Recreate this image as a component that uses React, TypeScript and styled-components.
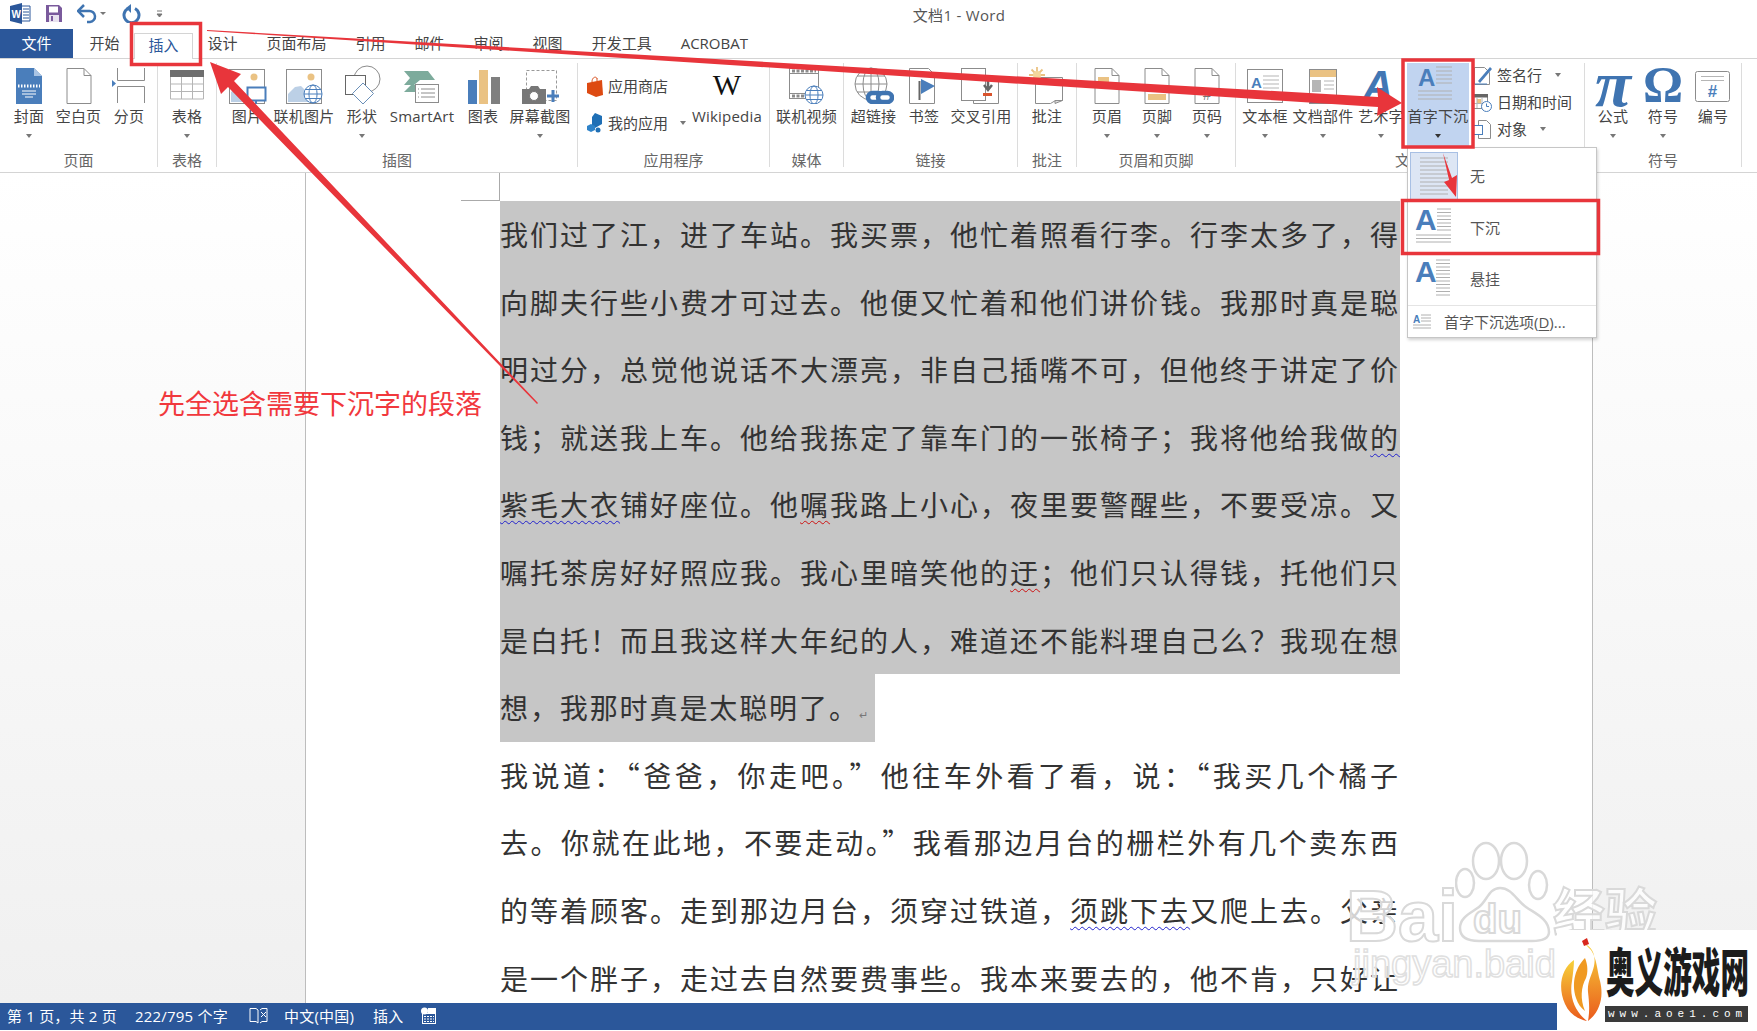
import React from "react";
import styled, { createGlobalStyle } from "styled-components";

const Global = createGlobalStyle`
  html, body { margin: 0; padding: 0; background: #fff; overflow: hidden; }
  * { box-sizing: border-box; }
`;

const UI = `"Open Sans", "Noto Sans CJK SC", sans-serif`;
const BLUE = "#4a7ebb";
const GREY = "#8c8c8c";
const LIGHT = "#b5b5b5";
const ORANGE = "#eac283";
const RED = "#e8353b";

const App_ = styled.div`
  position: relative;
  width: 1757px;
  height: 1031px;
  display: flex;
  flex-direction: column;
  overflow: hidden;
  font-family: ${UI};
  font-size: 15px;
  color: #444;
  padding-bottom: 1px;
`;

const TitleBar = styled.div`
  height: 29px;
  display: flex;
  align-items: center;
  flex: none;
`;
const QuickAccess = styled.div`
  width: 200px;
  padding: 0 0 2px 10px;
  display: flex;
  align-items: center;
  gap: 15px;
`;
const Title = styled.div`
  flex: 1;
  text-align: center;
  padding-right: 39px;
  color: #555;
  letter-spacing: 0.3px;
`;

const TabBar = styled.div`
  height: 30px;
  flex: none;
  display: flex;
  border-bottom: 1px solid #d4d4d4;
`;
const FileTab = styled.div`
  width: 73px;
  height: 29px;
  background: #2b579a;
  color: #fff;
  display: flex;
  align-items: center;
  justify-content: center;
  margin-right: 2px;
  padding-bottom: 2px;
`;
const Tab = styled.div<{ $active?: boolean }>`
  height: 29px;
  padding: 0 14.5px 2px;
  display: flex;
  align-items: center;
  color: #444;
  background: #fff;
  ${(p) =>
    p.$active &&
    `
    color: #2b579a;
    border: 1px solid #d4d4d4;
    border-bottom: 0;
    height: 26px;
    margin-top: 4px;
    padding: 0 13.5px 5px;
  `}
`;

const Ribbon = styled.div`
  height: 114px;
  flex: none;
  display: flex;
  border-bottom: 1px solid #d4d4d4;
  padding: 4px 0 5px;
`;
const Group = styled.div<{ $w: number }>`
  width: ${(p) => p.$w}px;
  flex: none;
  border-right: 1px solid #dcdcdc;
  display: flex;
  flex-direction: column;
`;
const GroupBody = styled.div<{ $pad?: number }>`
  flex: 1;
  display: flex;
  padding-left: ${(p) => p.$pad ?? 0}px;
`;
const GroupLabel = styled.div`
  height: 24px;
  line-height: 24px;
  text-align: center;
  color: #666;
`;
const RibbonBtn = styled.div<{ $w: number; $active?: boolean }>`
  width: ${(p) => p.$w}px;
  flex: none;
  height: 85px;
  display: flex;
  flex-direction: column;
  align-items: center;
  white-space: nowrap;
  background: ${(p) => (p.$active ? "#c1d4f0" : "transparent")};
`;
const IconBox = styled.div`
  height: 41px;
  display: flex;
  align-items: flex-end;
  justify-content: center;
`;
const BtnLabel = styled.div`
  height: 24px;
  line-height: 24px;
  letter-spacing: 0.2px;
`;
const Caret = styled.div<{ $dark?: boolean }>`
  width: 0;
  height: 0;
  margin-top: 6px;
  border-left: 3.5px solid transparent;
  border-right: 3.5px solid transparent;
  border-top: 4px solid ${(p) => (p.$dark ? "#333" : "#777")};
`;
const SmallStack = styled.div<{ $w: number; $row: number; $top?: number; $left?: number }>`
  width: ${(p) => p.$w}px;
  flex: none;
  margin-top: ${(p) => p.$top ?? 0}px;
  padding-left: ${(p) => p.$left ?? 0}px;
  display: flex;
  flex-direction: column;
  > div { height: ${(p) => p.$row}px; }
`;
const SmallRow = styled.div<{ $gap?: number }>`
  display: flex;
  align-items: center;
  gap: ${(p) => p.$gap ?? 4}px;
  white-space: nowrap;
`;
const InlineCaret = styled(Caret)`
  margin: 0 0 0 8px;
`;
const WikiMark = styled.div`
  font-family: "Liberation Serif", serif;
  font-size: 30px;
  line-height: 38px;
  color: #111;
`;
const GlyphIcon = styled.div<{ $s: number; $italic?: boolean }>`
  font-family: "Liberation Serif", serif;
  font-weight: bold;
  font-style: ${(p) => (p.$italic ? "italic" : "normal")};
  font-size: ${(p) => p.$s}px;
  line-height: 40px;
  color: #3f74b1;
`;

const DocArea = styled.div`
  flex: 1;
  display: flex;
  min-height: 0;
`;
const LeftGutter = styled.div`
  width: 305px;
  flex: none;
  background: linear-gradient(#ffffff, #f0f0f0);
`;
const RightGutter = styled(LeftGutter)`
  width: auto;
  flex: 1;
`;
const Page = styled.div`
  position: relative;
  width: 1288px;
  flex: none;
  background: #fff;
  border-left: 1px solid #bdbdbd;
  border-right: 1px solid #bdbdbd;
  padding: 28px 191px 0 194px;
  overflow: hidden;
  font-family: "Noto Sans CJK SC", sans-serif;
  font-size: 28px;
  color: #333;
  letter-spacing: 1.9px;
`;
const CropMark = styled.div`
  position: absolute;
  left: 155px;
  top: 0;
  width: 39px;
  height: 28px;
  border-right: 1px solid #aaa;
  border-bottom: 1px solid #aaa;
`;
const Line = styled.div<{ $sel?: boolean; $last?: boolean }>`
  height: 67.6px;
  line-height: 66px;
  background: ${(p) => (p.$sel ? "#c6c6c6" : "transparent")};
  width: ${(p) => (p.$last ? "375px" : "900px")};
  text-align: ${(p) => (p.$last ? "left" : "justify")};
  text-align-last: ${(p) => (p.$last ? "left" : "justify")};
`;
const Squiggle = styled.span<{ $c: string }>`
  text-decoration: underline wavy ${(p) => p.$c} 1px;
  text-underline-offset: 4px;
`;
const ReturnMark = styled.span`
  font-size: 11px;
  color: #777;
  letter-spacing: 0;
`;

const StatusBar = styled.div`
  height: 27px;
  flex: none;
  background: #2b579a;
  color: #fff;
  display: flex;
  align-items: center;
  padding: 0 0 2px 7px;
  letter-spacing: 0.2px;
`;
const StatusItem = styled.div<{ $w: number }>`
  width: ${(p) => p.$w}px;
  flex: none;
  white-space: nowrap;
  display: flex;
  align-items: center;
`;

const Menu = styled.div`
  position: absolute;
  left: 1407px;
  top: 147px;
  width: 190px;
  height: 191px;
  background: #fff;
  border: 1px solid #c6c6c6;
  box-shadow: 1px 2px 3px rgba(0, 0, 0, 0.18);
  display: flex;
  flex-direction: column;
  padding-top: 2px;
`;
const MenuItem = styled.div`
  height: 52px;
  display: flex;
  align-items: center;
  padding-left: 2px;
  color: #555;
`;
const MenuTile = styled.div<{ $on?: boolean }>`
  width: 48px;
  height: 48px;
  margin-right: 12px;
  display: flex;
  align-items: center;
  justify-content: center;
  background: ${(p) => (p.$on ? "#dde6f4" : "transparent")};
  border: 1px solid ${(p) => (p.$on ? "#a8c0e4" : "transparent")};
`;
const MenuOption = styled.div`
  margin-top: 1px;
  border-top: 1px solid #e4e4e4;
  height: 32px;
  display: flex;
  align-items: center;
  padding-left: 5px;
  gap: 13px;
  color: #555;
  u { text-underline-offset: 2px; }
`;

const Annotations = styled.svg`
  position: absolute;
  left: 0;
  top: 0;
  width: 1757px;
  height: 1031px;
  pointer-events: none;
`;
const Note = styled.div`
  position: absolute;
  left: 158px;
  top: 384px;
  font-size: 27px;
  line-height: 38px;
  color: #f1383d;
  font-family: "Noto Sans CJK SC", sans-serif;
  white-space: nowrap;
`;

const Watermark = styled.div`
  position: absolute;
  left: 1345px;
  top: 840px;
  width: 330px;
  height: 155px;
`;
const WmPaw = styled.svg`
  position: absolute;
  left: 110px;
  top: 0;
`;
const WmText = styled.div<{ $x: number; $y: number; $s: number; $thin?: boolean }>`
  position: absolute;
  left: ${(p) => p.$x}px;
  top: ${(p) => p.$y}px;
  font-family: "Liberation Sans", "Noto Sans CJK SC", sans-serif;
  font-size: ${(p) => p.$s}px;
  line-height: 1;
  font-weight: ${(p) => (p.$thin ? 400 : 700)};
  color: rgba(255, 255, 255, 0.78);
  -webkit-text-stroke: ${(p) => (p.$thin ? "1.5px #e0e0e0" : "2px #d9d9d9")};
  white-space: nowrap;
`;

const LogoBox = styled.div`
  position: absolute;
  left: 1557px;
  top: 930px;
  width: 200px;
  height: 101px;
  background: #fff;
`;
const LogoName = styled.div`
  position: absolute;
  left: 49px;
  top: 10px;
  width: 260px;
  font-family: "Noto Sans CJK SC", sans-serif;
  font-weight: 900;
  font-size: 52px;
  line-height: 60px;
  color: #1c1c1c;
  white-space: nowrap;
  transform-origin: left top;
  transform: scaleX(0.55);
`;
const LogoUrl = styled.div`
  position: absolute;
  left: 48px;
  top: 76px;
  width: 143px;
  height: 16px;
  background: #3a3a3a;
  color: #fff;
  font-family: "Liberation Mono", monospace;
  font-size: 11px;
  line-height: 16px;
  letter-spacing: 5px;
  padding-left: 3px;
  white-space: nowrap;
  overflow: hidden;
`;
const LogoFlame = styled.svg`
  position: absolute;
  left: 2px;
  top: 8px;
`;

/* ---------- icons ---------- */
const Svg: React.FC<{ w?: number; h?: number; children?: React.ReactNode }> = ({ w = 40, h = 40, children }) => (
  <svg width={w} height={h} viewBox={`0 0 ${w} ${h}`} fill="none">{children}</svg>
);
const pagePath = "M8 4.5h17l7 7v28H8z M25 4.5v7h7";
const Page0: React.FC<{ children?: React.ReactNode }> = ({ children }) => (
  <Svg><path d={pagePath} stroke={GREY} fill="#fff" />{children}</Svg>
);
const Cover = () => (
  <Svg>
    <path d="M7 4h18l8 8v28H7z" fill={BLUE} />
    <path d="M25 4l8 8h-8z" fill="#a9c4e4" />
    <path d="M9 22h22" stroke="#fff" strokeWidth="3" strokeDasharray="1.5 1.5" />
    <path d="M13 27h14M13 30h14M16 33h8" stroke="#fff" />
  </Svg>
);
const PageBreak = () => (
  <Svg>
    <path d="M8.5 4v12.5h27V4M8.5 39V22.5h27V39" stroke={GREY} />
    <path d="M3 16l4 3.5L3 23z" fill={BLUE} />
  </Svg>
);
const TableIcon = () => (
  <Svg>
    <rect x="3" y="6" width="34" height="7" fill="#6e6e6e" />
    <path d="M3.5 13v22h33V13M3.5 20h33M3.5 27.5h33M14.5 13v22M25.5 13v22" stroke={LIGHT} />
  </Svg>
);
const Picture = () => (
  <Svg>
    <rect x="2.5" y="5.5" width="35" height="34" stroke={GREY} fill="#fff" />
    <circle cx="27" cy="13" r="3.5" fill={ORANGE} />
    <path d="M4 38V28l7-6 9 10v6z" fill="#bcd0e6" />
    <rect x="20.5" y="23.5" width="18" height="13" fill="#fff" stroke={BLUE} strokeWidth="2" />
    <path d="M29 37v3" stroke={BLUE} strokeWidth="2" />
  </Svg>
);
const Globe: React.FC<{ x: number; y: number; r: number; c?: string }> = ({ x, y, r, c = BLUE }) => (
  <g stroke={c} fill="#fff">
    <circle cx={x} cy={y} r={r} />
    <ellipse cx={x} cy={y} rx={r * 0.45} ry={r} fill="none" />
    <path d={`M${x - r} ${y}h${2 * r}M${x - r * 0.85} ${y - r * 0.5}h${1.7 * r}M${x - r * 0.85} ${y + r * 0.5}h${1.7 * r}`} />
  </g>
);
const OnlinePicture = () => (
  <Svg>
    <rect x="2.5" y="5.5" width="35" height="34" stroke={GREY} fill="#fff" />
    <circle cx="27" cy="13" r="3.5" fill={ORANGE} />
    <path d="M4 38V30l7-7 6-1 9 9v7z" fill="#bcd0e6" />
    <Globe x={29} y={30} r={9} />
  </Svg>
);
const Shapes = () => (
  <Svg>
    <circle cx="25" cy="15" r="13" stroke={GREY} fill="#fff" />
    <rect x="3.5" y="11.5" width="20" height="19" stroke="#666" fill="#fff" />
    <path d="M21 19l10.5 10.5L21 40 10.5 29.5z" stroke="#6a8fb8" fill="#fff" />
  </Svg>
);
const SmartArtIcon = () => (
  <Svg>
    <path d="M2 7h24l7 9H18l-6 5H2l6-7z" fill="#7dab9c" />
    <path d="M2 28l7-7h5v7z" fill="#7dab9c" />
    <rect x="13.5" y="20.5" width="23" height="18" stroke={GREY} fill="#fff" />
    <path d="M19 25h14M19 29h14M19 33h14M16 25h1M16 29h1M16 33h1" stroke={GREY} />
  </Svg>
);
const Chart = () => (
  <Svg>
    <rect x="5" y="16" width="9" height="24" fill={BLUE} />
    <rect x="16" y="6" width="9" height="34" fill={ORANGE} />
    <rect x="28" y="13" width="9" height="27" fill="#7f7f7f" />
  </Svg>
);
const Screenshot = () => (
  <Svg>
    <rect x="6.5" y="6.5" width="30" height="30" stroke="#999" strokeDasharray="3 2" />
    <path d="M2 25h7l2-3h7l2 3h6v15H2z" fill="#777" />
    <circle cx="14" cy="32" r="4.5" fill="#fff" stroke="#777" />
    <path d="M33 26v12M27 32h12" stroke={BLUE} strokeWidth="3" />
  </Svg>
);
const StoreBag = () => (
  <Svg w={18} h={22}>
    <path d="M6 7C6 2 10 1 11 3.5M11 6V3" stroke="#d9501e" />
    <path d="M1 8l15-3 1 15-7 2-9-4z" fill="#dd4a12" />
  </Svg>
);
const MyApps = () => (
  <Svg w={18} h={22}>
    <path d="M9 1l7 3v8l-7 4-3-2V5z" fill="#1f6fb5" />
    <path d="M5 12l4 2v4l-4 2-4-2v-4z" fill="#2f83c9" />
    <circle cx="12" cy="18" r="2.5" fill="#1f6fb5" />
  </Svg>
);
const Video = () => (
  <Svg>
    <rect x="2.5" y="4.5" width="29" height="30" stroke={GREY} fill="#fff" />
    <path d="M2.5 9.5h29M2.5 29.5h29" stroke={GREY} />
    <path d="M5 7h24M5 32h16" stroke={GREY} strokeWidth="3" strokeDasharray="3 1.5" />
    <Globe x={27} y={31} r={9} />
  </Svg>
);
const Hyperlink = () => (
  <Svg>
    <g stroke={GREY}>
      <circle cx="17" cy="20" r="16" />
      <ellipse cx="17" cy="20" rx="8" ry="16" />
      <path d="M1 20h32M3 12h28M3 28h28M17 4v32" />
    </g>
    <g stroke="#3f74b1" strokeWidth="4.5" fill="#fff">
      <rect x="14" y="29" width="15" height="9" rx="4.5" />
      <rect x="24" y="29" width="14" height="9" rx="4.5" />
    </g>
  </Svg>
);
const Bookmark = () => (
  <Svg>
    <path d="M5.5 4.5h19l6 6v29h-25z" stroke={GREY} fill="#fff" />
    <path d="M15.5 17v19" stroke="#666" strokeWidth="2" />
    <path d="M17 15l14 7-14 8z" fill={BLUE} />
  </Svg>
);
const CrossRef = () => (
  <Svg w={44}>
    <rect x="2.5" y="4.5" width="24" height="32" stroke={GREY} fill="#fff" />
    <path d="M14 13.5h25.5v26H14.5v-3" stroke={GREY} />
    <path d="M29 15v9M25 21l4 5 4-5" stroke="#666" strokeWidth="2.5" />
    <rect x="24" y="29" width="9" height="3" fill="#d9532c" />
  </Svg>
);
const Comment = () => (
  <Svg>
    <path d="M8.5 13.5h27v23h-7l-5 3h-15z" stroke={GREY} fill="#fff" />
    <path d="M28 36.5v3l7.5-3z" fill="#ddd" stroke={GREY} />
    <g stroke={ORANGE} strokeWidth="1.8">
      <path d="M10 3v16M2 11h16M4.5 5.5l11 11M15.5 5.5l-11 11" />
    </g>
    <circle cx="10" cy="11" r="4" fill="#f3d69c" />
  </Svg>
);
const Header = () => (
  <Page0><rect x="11" y="13" width="11" height="6" fill={ORANGE} /></Page0>
);
const Footer = () => (
  <Page0><rect x="11" y="30" width="18" height="6" fill={ORANGE} /></Page0>
);
const PageNum = () => (
  <Page0><text x="20" y="36" fontSize="14" fill="#777" textAnchor="middle" fontFamily="Liberation Sans">#</text></Page0>
);
const TextBox = () => (
  <Svg>
    <rect x="2.5" y="5.5" width="35" height="33" stroke={GREY} fill="#fff" />
    <text x="6" y="24" fontSize="15" fontWeight="700" fill={BLUE} fontFamily="Liberation Sans">A</text>
    <path d="M18 12h16M18 16h16M18 20h16M18 24h16M6 29h28M6 33h28" stroke={LIGHT} />
  </Svg>
);
const DocParts = () => (
  <Svg>
    <rect x="6.5" y="5.5" width="27" height="34" stroke={GREY} fill="#fff" />
    <rect x="7" y="6" width="26" height="7" fill={ORANGE} />
    <rect x="9" y="16" width="9" height="12" fill={LIGHT} />
    <path d="M21 17h10M21 21h10M21 25h10" stroke={LIGHT} />
    <rect x="7" y="33" width="26" height="6" fill="#3f74b1" />
  </Svg>
);
const WordArt = () => (
  <Svg>
    <text x="17" y="36" fontSize="42" fontStyle="italic" fontWeight="700" fill="#4277b4" textAnchor="middle" fontFamily="Liberation Sans">A</text>
  </Svg>
);
const DropLines: React.FC<{ x: number; n: number; y: number; to: number; g: number; c?: string }> = ({ x, n, y, to, g, c = "#b0b0b0" }) => (
  <path d={Array.from({ length: n }, (_, i) => `M${x} ${y + i * g}H${to}`).join("")} stroke={c} />
);
const DropCapIcon = () => (
  <Svg w={40} h={42}>
    <text x="0" y="24" fontSize="24" fontWeight="700" fill={BLUE} fontFamily="Liberation Sans">A</text>
    <DropLines x={18} to={34} y={5} g={4} n={5} />
    <DropLines x={0} to={34} y={29} g={4} n={3} />
  </Svg>
);
const MenuDrop = () => (
  <Svg w={40} h={44}>
    <text x="1" y="25" fontSize="30" fontWeight="700" fill={BLUE} fontFamily="Liberation Sans">A</text>
    <DropLines x={23} to={37} y={4} g={3.5} n={7} />
    <DropLines x={2} to={37} y={30} g={3.5} n={3} />
  </Svg>
);
const MenuHang = () => (
  <Svg w={40} h={44}>
    <text x="1" y="25" fontSize="30" fontWeight="700" fill={BLUE} fontFamily="Liberation Sans">A</text>
    <DropLines x={22} to={36} y={3} g={3.5} n={11} />
  </Svg>
);
const Signature = () => (
  <Svg w={20} h={22}>
    <path d="M2.5 3.5h10l5 5v12h-15z" stroke={GREY} fill="#fff" />
    <path d="M6 17L18 3l2 2L8 19z" fill={BLUE} />
    <path d="M3 20h12" stroke={BLUE} />
  </Svg>
);
const DateTime = () => (
  <Svg w={20} h={22}>
    <rect x="0.5" y="3.5" width="15" height="14" stroke={GREY} fill="#fff" />
    <rect x="0" y="3" width="16" height="3.5" fill="#666" />
    <rect x="5" y="8" width="4" height="4" fill={ORANGE} />
    <path d="M1 12.5h14M5 7v10M10 7v10" stroke={LIGHT} />
    <circle cx="14.5" cy="15.5" r="5" fill="#fff" stroke={BLUE} />
    <path d="M14.5 12.5v3h2.5" stroke={BLUE} />
  </Svg>
);
const ObjectIcon = () => (
  <Svg w={20} h={22}>
    <path d="M6.5 2.5h8l4 4v14h-12z" stroke={GREY} fill="#fff" />
    <rect x="1.5" y="7.5" width="9" height="9" stroke={BLUE} fill="#fff" />
  </Svg>
);
const NumberIcon = () => (
  <Svg>
    <rect x="2.5" y="7.5" width="34" height="30" rx="2" stroke={GREY} fill="#fff" />
    <path d="M8 12.5h23M8 16.5h23" stroke={LIGHT} />
    <text x="19.5" y="33" fontSize="17" fontWeight="700" fill={BLUE} textAnchor="middle" fontFamily="Liberation Sans">#</text>
  </Svg>
);
const WordLogo = () => (
  <Svg w={21} h={21}>
    <path d="M0 3l12-3v21L0 18z" fill="#2b579a" />
    <path d="M12 3h8v15h-8" fill="#fff" stroke="#2b579a" />
    <path d="M13 6h6M13 9h6M13 12h6M13 15h6" stroke="#2b579a" />
    <text x="1.5" y="15" fontSize="10" fontWeight="700" fill="#fff" fontFamily="Liberation Sans">W</text>
  </Svg>
);
const SaveIcon = () => (
  <Svg w={16} h={17}>
    <path d="M0 0h13l3 3v14H0z" fill="#7a5a9c" />
    <rect x="3" y="1.5" width="9" height="6" fill="#fff" />
    <rect x="3" y="10" width="10" height="7" fill="#e8e2ef" />
    <rect x="5" y="11" width="2" height="5" fill="#7a5a9c" />
  </Svg>
);
const UndoIcon = () => (
  <Svg w={30} h={20}>
    <path d="M3 7h9a5.5 5.5 0 0 1 1 11H10" stroke="#3f74b1" strokeWidth="2.5" />
    <path d="M7 1L1 7l6 6" stroke="#3f74b1" strokeWidth="2.5" />
    <path d="M23 8l3 3 3-3z" fill="#777" />
  </Svg>
);
const RedoIcon = () => (
  <Svg w={19} h={19}>
    <path d="M6 4.5a7.5 7.5 0 1 0 7 0" stroke="#3f74b1" strokeWidth="3" />
    <path d="M9 0v9l-5-5z" fill="#3f74b1" />
  </Svg>
);
const CustomizeIcon = () => (
  <Svg w={8} h={10}>
    <path d="M1 2h5M1 5l2.5 3L6 5z" stroke="#777" fill="#777" />
  </Svg>
);
const BookIcon = () => (
  <Svg w={19} h={17}>
    <path d="M1 1.5h6l2 1.5v13l-2-1.5H1zM11 3l2-1.5h5v13h-5l-2 1.5" stroke="#fff" fill="none" />
    <path d="M12 5l5 5M17 5l-5 5" stroke="#fff" />
  </Svg>
);
const MacroIcon = () => (
  <Svg w={16} h={18}>
    <circle cx="3.5" cy="4" r="3.5" fill="#fff" />
    <rect x="7" y="1" width="8" height="5" fill="#fff" />
    <rect x="1.5" y="6.5" width="13" height="10" stroke="#fff" />
    <path d="M3 9.5h10M3 12h10M3 14.5h10" stroke="#fff" strokeDasharray="2 1" />
  </Svg>
);

const Btn: React.FC<{ w: number; label: string; icon: React.ReactNode; caret?: boolean; active?: boolean }> = ({ w, label, icon, caret, active }) => (
  <RibbonBtn $w={w} $active={active}>
    <IconBox>{icon}</IconBox>
    <BtnLabel>{label}</BtnLabel>
    {caret && <Caret $dark={active} />}
  </RibbonBtn>
);

const TABS = ["开始", "插入", "设计", "页面布局", "引用", "邮件", "审阅", "视图", "开发工具", "ACROBAT"];

const LINES: { t: React.ReactNode; sel?: boolean; last?: boolean }[] = [
  { t: "我们过了江，进了车站。我买票，他忙着照看行李。行李太多了，得", sel: true },
  { t: "向脚夫行些小费才可过去。他便又忙着和他们讲价钱。我那时真是聪", sel: true },
  { t: "明过分，总觉他说话不大漂亮，非自己插嘴不可，但他终于讲定了价", sel: true },
  { t: <>钱；就送我上车。他给我拣定了靠车门的一张椅子；我将他给我做<Squiggle $c="#2222cc">的</Squiggle></>, sel: true },
  { t: <><Squiggle $c="#2222cc">紫毛大衣</Squiggle>铺好座位。他<Squiggle $c="#cc1111">嘱</Squiggle>我路上小心，夜里要警醒些，不要受凉。又</>, sel: true },
  { t: <>嘱托茶房好好照应我。我心里暗笑他的<Squiggle $c="#cc1111">迂</Squiggle>；他们只认得钱，托他们只</>, sel: true },
  { t: "是白托！而且我这样大年纪的人，难道还不能料理自己么？我现在想", sel: true },
  { t: <>想，我那时真是太聪明了。<ReturnMark>↵</ReturnMark></>, sel: true, last: true },
  { t: "我说道：“爸爸，你走吧。”他往车外看了看，说：“我买几个橘子" },
  { t: "去。你就在此地，不要走动。”我看那边月台的栅栏外有几个卖东西" },
  { t: <>的等着顾客。走到那边月台，须穿过铁道，<Squiggle $c="#2222cc">须跳下去</Squiggle>又爬上去。父亲</> },
  { t: "是一个胖子，走过去自然要费事些。我本来要去的，他不肯，只好让" },
];

export default function App() {
  return (
    <App_ lang="zh-CN">
      <Global />
      <TitleBar>
        <QuickAccess>
          <WordLogo />
          <SaveIcon />
          <UndoIcon />
          <RedoIcon />
          <CustomizeIcon />
        </QuickAccess>
        <Title>文档1 - Word</Title>
      </TitleBar>

      <TabBar>
        <FileTab>文件</FileTab>
        {TABS.map((t) => (
          <Tab key={t} $active={t === "插入"}>{t}</Tab>
        ))}
      </TabBar>

      <Ribbon>
        <Group $w={158}>
          <GroupBody $pad={5}>
            <Btn w={48} label="封面" icon={<Cover />} caret />
            <Btn w={51} label="空白页" icon={<Page0 />} />
            <Btn w={50} label="分页" icon={<PageBreak />} />
          </GroupBody>
          <GroupLabel>页面</GroupLabel>
        </Group>
        <Group $w={59}>
          <GroupBody>
            <Btn w={58} label="表格" icon={<TableIcon />} caret />
          </GroupBody>
          <GroupLabel>表格</GroupLabel>
        </Group>
        <Group $w={361}>
          <GroupBody $pad={5}>
            <Btn w={50} label="图片" icon={<Picture />} />
            <Btn w={64} label="联机图片" icon={<OnlinePicture />} />
            <Btn w={52} label="形状" icon={<Shapes />} caret />
            <Btn w={68} label="SmartArt" icon={<SmartArtIcon />} />
            <Btn w={54} label="图表" icon={<Chart />} />
            <Btn w={60} label="屏幕截图" icon={<Screenshot />} caret />
          </GroupBody>
          <GroupLabel>插图</GroupLabel>
        </Group>
        <Group $w={192}>
          <GroupBody $pad={8}>
            <SmallStack $w={104} $row={37} $top={4}>
              <SmallRow><StoreBag />应用商店</SmallRow>
              <SmallRow><MyApps />我的应用<InlineCaret /></SmallRow>
            </SmallStack>
            <Btn w={74} label="Wikipedia" icon={<WikiMark>W</WikiMark>} />
          </GroupBody>
          <GroupLabel>应用程序</GroupLabel>
        </Group>
        <Group $w={74}>
          <GroupBody>
            <Btn w={73} label="联机视频" icon={<Video />} />
          </GroupBody>
          <GroupLabel>媒体</GroupLabel>
        </Group>
        <Group $w={174}>
          <GroupBody $pad={1}>
            <Btn w={57} label="超链接" icon={<Hyperlink />} />
            <Btn w={44} label="书签" icon={<Bookmark />} />
            <Btn w={70} label="交叉引用" icon={<CrossRef />} />
          </GroupBody>
          <GroupLabel>链接</GroupLabel>
        </Group>
        <Group $w={59}>
          <GroupBody>
            <Btn w={58} label="批注" icon={<Comment />} />
          </GroupBody>
          <GroupLabel>批注</GroupLabel>
        </Group>
        <Group $w={159}>
          <GroupBody $pad={5}>
            <Btn w={50} label="页眉" icon={<Header />} caret />
            <Btn w={50} label="页脚" icon={<Footer />} caret />
            <Btn w={50} label="页码" icon={<PageNum />} caret />
          </GroupBody>
          <GroupLabel>页眉和页脚</GroupLabel>
        </Group>
        <Group $w={349}>
          <GroupBody $pad={3}>
            <Btn w={52} label="文本框" icon={<TextBox />} caret />
            <Btn w={64} label="文档部件" icon={<DocParts />} caret />
            <Btn w={52} label="艺术字" icon={<WordArt />} caret />
            <Btn w={62} label="首字下沉" icon={<DropCapIcon />} caret active />
            <SmallStack $w={110} $row={27} $top={-2} $left={3}>
              <SmallRow $gap={5}><Signature />签名行<InlineCaret /></SmallRow>
              <SmallRow $gap={5}><DateTime />日期和时间</SmallRow>
              <SmallRow $gap={5}><ObjectIcon />对象<InlineCaret /></SmallRow>
            </SmallStack>
          </GroupBody>
          <GroupLabel>文本</GroupLabel>
        </Group>
        <Group $w={157}>
          <GroupBody $pad={3}>
            <Btn w={50} label="公式" icon={<GlyphIcon $s={66} $italic>π</GlyphIcon>} caret />
            <Btn w={50} label="符号" icon={<GlyphIcon $s={50}>Ω</GlyphIcon>} caret />
            <Btn w={50} label="编号" icon={<NumberIcon />} />
          </GroupBody>
          <GroupLabel>符号</GroupLabel>
        </Group>
      </Ribbon>

      <DocArea>
        <LeftGutter />
        <Page>
          <CropMark />
          {LINES.map((l, i) => (
            <Line key={i} $sel={l.sel} $last={l.last}>{l.t}</Line>
          ))}
        </Page>
        <RightGutter />
      </DocArea>

      <StatusBar>
        <StatusItem $w={128}>第 1 页，共 2 页</StatusItem>
        <StatusItem $w={114}>222/795 个字</StatusItem>
        <StatusItem $w={35}><BookIcon /></StatusItem>
        <StatusItem $w={89}>中文(中国)</StatusItem>
        <StatusItem $w={48}>插入</StatusItem>
        <StatusItem $w={20}><MacroIcon /></StatusItem>
      </StatusBar>

      <Menu>
        <MenuItem>
          <MenuTile $on>
            <Svg w={36} h={42}><DropLines x={4} to={32} y={3} g={4} n={10} /></Svg>
          </MenuTile>
          无
        </MenuItem>
        <MenuItem>
          <MenuTile><MenuDrop /></MenuTile>
          下沉
        </MenuItem>
        <MenuItem>
          <MenuTile><MenuHang /></MenuTile>
          悬挂
        </MenuItem>
        <MenuOption>
          <Svg w={18} h={18}>
            <text x="0" y="10" fontSize="10" fontWeight="700" fill={BLUE} fontFamily="Liberation Sans">A</text>
            <DropLines x={8} to={18} y={2} g={3} n={3} />
            <DropLines x={0} to={18} y={12} g={3} n={2} />
          </Svg>
          <span>首字下沉选项(<u>D</u>)...</span>
        </MenuOption>
      </Menu>

      <Watermark>
        <WmPaw width="100" height="105" viewBox="0 0 100 105" fill="rgba(255,255,255,0.7)" stroke="#d9d9d9" strokeWidth="2.5">
          <ellipse cx="31" cy="21" rx="13" ry="18" />
          <ellipse cx="59" cy="21" rx="13" ry="18" />
          <ellipse cx="10" cy="43" rx="9" ry="14" />
          <ellipse cx="83" cy="45" rx="9" ry="14" />
          <path d="M45 48c12 0 16 12 26 19 10 7 23 12 23 25 0 8-9 9-17 9H24c-11 0-19-3-19-13 0-11 11-15 19-21 8-6 10-19 21-19z" />
        </WmPaw>
        <WmText $x={1} $y={40} $s={72}>Bai</WmText>
        <WmText $x={128} $y={59} $s={40}>du</WmText>
        <WmText $x={208} $y={48} $s={52}>经验</WmText>
        <WmText $x={8} $y={105} $s={38} $thin>jingyan.baidu.com</WmText>
      </Watermark>

      <Annotations viewBox="0 0 1757 1031" fill="none">
        <g stroke={RED} strokeWidth="3.5">
          <rect x="131.5" y="23.5" width="69" height="41" />
          <rect x="1403" y="60" width="70" height="87" />
          <rect x="1402.5" y="200.5" width="196" height="53" />
        </g>
        <g fill={RED}>
          <polygon points="207,30 1378,97 1377,87 1402,103 1377,116 1378,107 207,31" />
          <polygon points="538,403 234,81 241,74 210,62 221,94 228,87 537,404" />
          <polygon points="1443,153 1452,178 1457,175 1456,197 1444,182 1449,180" />
        </g>
      </Annotations>
      <Note>先全选含需要下沉字的段落</Note>

      <LogoBox>
        <LogoFlame width="44" height="84" viewBox="0 0 44 84">
          <defs>
            <linearGradient id="fl" x1="0" y1="0" x2="0" y2="1">
              <stop offset="0" stopColor="#f7d23a" />
              <stop offset="1" stopColor="#ea5a1c" />
            </linearGradient>
          </defs>
          <path d="M15 22C3 30-2 48 6 66c4 9 12 15 22 17-12-9-18-24-15-40 1-8 2-15 2-21z" fill="url(#fl)" />
          <path d="M26 20c-9 9-14 24-9 40 2 6 5 10 9 13-5-12-4-24 1-33 2-5 2-13-1-20z" fill="#f09a22" />
          <path d="M26 6c8 4 11 12 9 22-2 9-7 16-6 26 1 9 2 18 0 29 12-9 16-24 12-40-3-11-3-22-9-31z" fill="url(#fl)" />
          <path d="M23 3l5-3 2 6-5 2z" fill="#d8281c" />
        </LogoFlame>
        <LogoName>奥义游戏网</LogoName>
        <LogoUrl>www.aoe1.com</LogoUrl>
      </LogoBox>
    </App_>
  );
}
